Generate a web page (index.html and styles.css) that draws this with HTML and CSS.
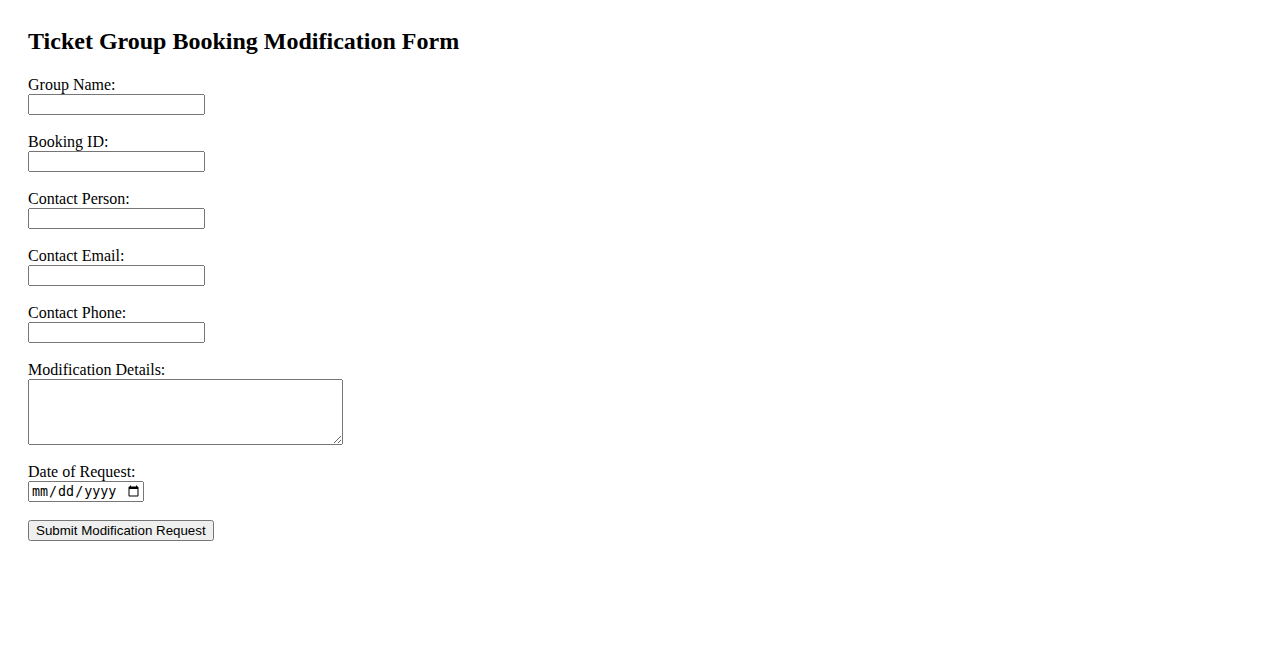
FILE: index.html
```html
<!DOCTYPE html>
<html>
<head>
<meta charset="utf-8">
<title>Ticket Group Booking Modification Form</title>
<link rel="stylesheet" href="styles.css">
</head>
<body>
<h2 class="title">Ticket Group Booking Modification Form</h2>
<form class="form">
  <div class="field"><label for="g">Group Name:</label><input id="g" class="text" type="text"></div>
  <div class="field"><label for="b">Booking ID:</label><input id="b" class="text" type="text"></div>
  <div class="field"><label for="p">Contact Person:</label><input id="p" class="text" type="text"></div>
  <div class="field"><label for="e">Contact Email:</label><input id="e" class="text" type="email"></div>
  <div class="field"><label for="t">Contact Phone:</label><input id="t" class="text" type="tel"></div>
  <div class="field"><label for="m">Modification Details:</label><textarea id="m" class="area" rows="4" cols="40"></textarea></div>
  <div class="field"><label for="d">Date of Request:</label><input id="d" class="date" type="date"></div>
  <div class="field"><button class="submit" type="submit">Submit Modification Request</button></div>
</form>
</body>
</html>
```
FILE: styles.css
```css
body {
  margin: 0;
  padding: 28px 28px;
  font-family: "Liberation Serif", serif;
  font-size: 16px;
}
.title {
  font-size: 24px;
  margin: 0 0 21px;
}
.field {
  margin-bottom: 18px;
}
.field label {
  display: block;
}
.text {
  box-sizing: border-box;
  width: 177px;
  height: 21px;
}
.area {
  display: block;
  box-sizing: border-box;
  width: 315px;
  height: 66px;
}
.date {
  box-sizing: border-box;
  width: 116px;
  height: 21px;
}
```
